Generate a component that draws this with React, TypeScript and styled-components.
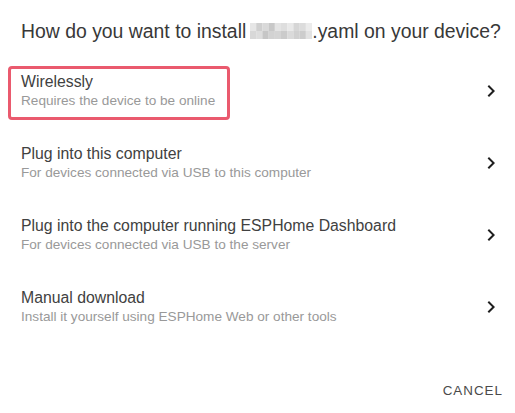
import styled, { createGlobalStyle } from 'styled-components'

const GlobalStyle = createGlobalStyle`
    html, body {
        margin: 0;
        padding: 0;
        background: #ffffff;
    }
    body {
        font-family: "Liberation Sans", Arial, sans-serif;
    }
`

const Dialog = styled.div`
    width: 515px;
    height: 413px;
    display: flex;
    flex-direction: column;
    background: #ffffff;
`

const Heading = styled.div`
    padding: 19px 0 0 21px;
    font-size: 19.4px;
    line-height: 24px;
    color: #383838;
    white-space: nowrap;
    display: flex;
    align-items: center;
`

const Redacted = styled.svg`
    display: inline-block;
    margin: 0 0 0 4px;
    flex: none;
`

const List = styled.div`
    margin-top: 12px;
    display: flex;
    flex-direction: column;
`

const Item = styled.div`
    position: relative;
    height: 72px;
    display: flex;
    align-items: center;
    padding: 0 12px 0 21px;
    cursor: pointer;
`

const Texts = styled.div`
    flex: 1;
    display: flex;
    flex-direction: column;
`

const Primary = styled.div`
    font-size: 15.8px;
    line-height: 20px;
    color: #414141;
`

const Secondary = styled.div`
    font-size: 13.6px;
    line-height: 18px;
    color: #999999;
`

const Highlight = styled.div`
    position: absolute;
    left: 8px;
    top: 11px;
    width: 222px;
    height: 54px;
    box-sizing: border-box;
    border: 3px solid #ea5a6e;
    border-radius: 4px;
    pointer-events: none;
`

const Footer = styled.div`
    margin-top: auto;
    display: flex;
    justify-content: flex-end;
    padding: 0 4px 5px 0;
`

const TextButton = styled.button`
    background: none;
    border: none;
    height: 36px;
    padding: 0 8px;
    font-family: "Liberation Sans", Arial, sans-serif;
    font-size: 13.4px;
    letter-spacing: 1px;
    color: #4a4a4a;
    text-transform: uppercase;
    cursor: pointer;
`

const Chevron = () => (
  <svg width="24" height="24" viewBox="0 0 24 24" fill="#1f1f1f">
    <path d="M10 6L8.59 7.41 13.17 12l-4.58 4.59L10 18l6-6z" />
  </svg>
)

const mosaic = [
  ['#e6e6e6', '#cfcfcf', '#d9d9d9', '#c8c8c8', '#e4e4e4', '#dedede', '#e9e9e9', '#d6d6d6', '#dcdcdc', '#ebebeb'],
  ['#d8d8d8', '#dddddd', '#c6c6c6', '#d2d2d2', '#d4d4d4', '#cbcbcb', '#dadada', '#d0d0d0', '#cccccc', '#e2e2e2'],
]

const options = [
  { title: 'Wirelessly', sub: 'Requires the device to be online', marked: true },
  { title: 'Plug into this computer', sub: 'For devices connected via USB to this computer' },
  { title: 'Plug into the computer running ESPHome Dashboard', sub: 'For devices connected via USB to the server' },
  { title: 'Manual download', sub: 'Install it yourself using ESPHome Web or other tools' },
]

const App = () => {
  return (
    <>
      <GlobalStyle />
      <Dialog>
        <Heading>
          {"How do you want to install"}
          <Redacted width="62" height="16" viewBox="0 0 62 16">
            {mosaic.map((row, r) =>
              row.map((c, i) => (
                <rect key={`${r}-${i}`} x={i * 6.2} y={r * 8} width="6.3" height="8.1" fill={c} />
              ))
            )}
          </Redacted>
          {".yaml on your device?"}
        </Heading>

        <List>
          {options.map((o) => (
            <Item key={o.title}>
              <Texts>
                <Primary>{o.title}</Primary>
                <Secondary>{o.sub}</Secondary>
              </Texts>
              <Chevron />
              {o.marked && <Highlight />}
            </Item>
          ))}
        </List>

        <Footer>
          <TextButton>{"Cancel"}</TextButton>
        </Footer>
      </Dialog>
    </>
  )
}

export default App
